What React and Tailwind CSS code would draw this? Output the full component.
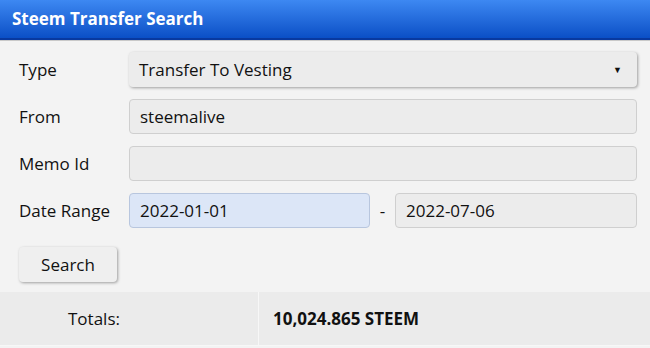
export default function App() {
  const field = 'h-[35px] rounded border px-[10px] flex items-center text-[17px] text-[#111]';
  const grey = ' border-[#cfcfcf] bg-[#ececec]';
  return (
    <div className="w-[650px] h-[348px] bg-[#f3f3f3] font-['Open_Sans',sans-serif] overflow-hidden">
      <div className="h-[40px] bg-gradient-to-b from-[#3d88f2] to-[#0a4fc6] border-b-2 border-[#0839a0] flex items-center px-[12px]">
        <span className="text-white font-bold text-[17px]">Steem Transfer Search</span>
      </div>
      <div className="h-px bg-[#c9c9c9]" />
      <div className="pl-[19px] pr-[13px] pt-[11px]">
        <div className="grid grid-cols-[110px_1fr] gap-y-[12px] items-center text-[17px] text-[#111]">
          <span>Type</span>
          <div className="h-[35px] rounded bg-[#ececec] shadow-[1px_1px_3px_rgba(0,0,0,0.35)] px-[10px] flex items-center justify-between">
            <span>Transfer To Vesting</span>
            <span className="text-[9px] mr-[5px]">▼</span>
          </div>
          <span>From</span>
          <div className={field + grey}>steemalive</div>
          <span>Memo Id</span>
          <div className={field + grey}></div>
          <span>Date Range</span>
          <div className="flex items-center">
            <div className={field + ' w-[241px] bg-[#dce6f7] border-[#b8c6de]'}>2022-01-01</div>
            <span className="w-[25px] text-center">-</span>
            <div className={field + grey + ' flex-1'}>2022-07-06</div>
          </div>
        </div>
        <button className="mt-[19px] w-[98px] h-[35px] rounded bg-[#efefef] shadow-[1px_1px_3px_rgba(0,0,0,0.35)] text-[17px] text-[#111]">Search</button>
      </div>
      <div className="mt-[10px] h-[54px] bg-[#ebebeb] flex border-b border-[#f7f7f7] text-[17px] text-[#111]">
        <div className="w-[259px] border-r border-[#f7f7f7] flex items-center pl-[68px]">Totals:</div>
        <div className="flex-1 flex items-center pl-[14px] font-bold">10,024.865 STEEM</div>
      </div>
    </div>
  );
}
